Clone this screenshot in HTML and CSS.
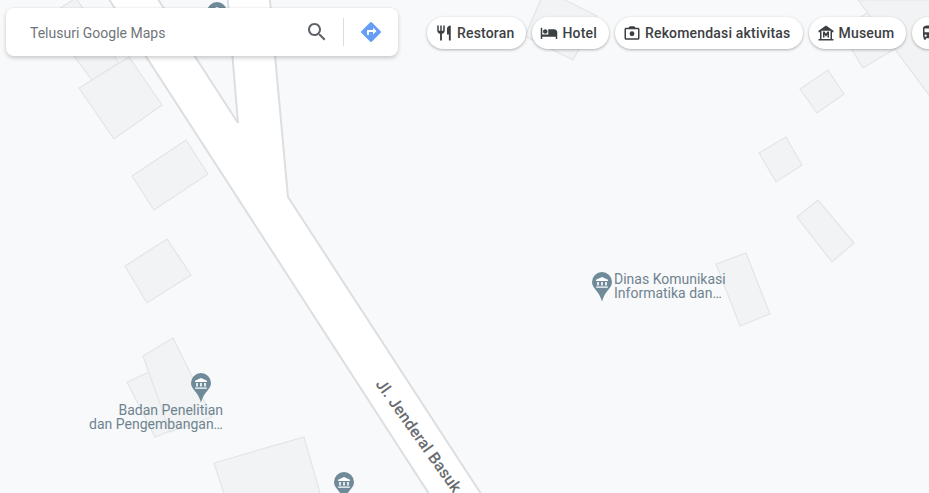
FILE: index.html
```html
<!DOCTYPE html>
<html lang="id">
<head>
<meta charset="utf-8">
<title>Google Maps</title>
<link rel="stylesheet" href="styles.css">
</head>
<body>
<div class="map">
  <svg class="map-art" width="929" height="493" viewBox="0 0 929 493" aria-hidden="true">
    <defs>
      <g id="pin">
        <path class="pin-body" d="M0-10a10 10 0 0 1 10 10c0 6.500-6.800 8-10 19.500C-3.200 8-10 6.500-10 0a10 10 0 0 1 10-10z"/>
        <path class="pin-glyph" d="M0-5 6-2.300V-1H-6V-2.300zM-4.800 0h1.600v3.600h-1.600zM-.8 0h1.600v3.600h-1.600zM3.200 0h1.600v3.600H3.200zM-5.800 4.400h11.600v1.300H-5.800z"/>
      </g>
    </defs>
    <g class="building">
      <polygon points="76,-2 119,63 92,80 45,18"/>
      <polygon points="79,88 129,57 162,105 114,139"/>
      <polygon points="132,176 186,140 208,174 154,210"/>
      <polygon points="125,266 167,239 191,275 147,303"/>
      <polygon points="127,382 149,372 178,428 155,437"/>
      <polygon points="143,356 173,338 212,417 170,432"/>
      <polygon points="214,463 304,437 322,500 226,500"/>
      <polygon points="545,-10 597,16 573,60 525,36"/>
      <polygon points="840,30 880,5 893,50 863,68"/>
      <polygon points="858,0 929,95 940,0"/>
      <polygon points="800,89 828,70 844,94 817,113"/>
      <polygon points="759,153 786,137 802,165 776,182"/>
      <polygon points="797,217 818,200 854,243 832,262"/>
      <polygon points="716,264 746,253 770,314 740,326"/>
    </g>
    <path class="road" d="M103-10 433 500H485L288 197 269-10H227L238 123 152-10Z"/>
    <use href="#pin" x="217" y="12"/>
    <use href="#pin" x="602" y="282"/>
    <use href="#pin" x="201" y="383"/>
    <use href="#pin" x="344" y="482"/>
  </svg>

  <div class="label label-dinas">Dinas Komunikasi<br>Informatika dan…</div>
  <div class="label label-badan">Badan Penelitian<br>dan Pengembangan…</div>
  <div class="road-label">Jl. Jenderal Basuk</div>

  <div class="topbar">
    <div class="search">
      <span class="search-text">Telusuri Google Maps</span>
      <svg class="search-icon" width="24" height="24" viewBox="0 0 24 24"><path d="M15.500 14h-.79l-.28-.27C15.410 12.590 16 11.110 16 9.500 16 5.910 13.090 3 9.500 3S3 5.910 3 9.500 5.910 16 9.500 16c1.610 0 3.090-.59 4.230-1.570l.27.28v.79l5 4.990L20.490 19l-4.990-5zm-6 0C7.010 14 5 11.990 5 9.500S7.010 5 9.500 5 14 7.010 14 9.500 11.990 14 9.500 14z"/></svg>
      <span class="divider"></span>
      <svg class="dir-icon" width="24" height="24" viewBox="0 0 24 24"><path d="M21.710 11.290l-9-9c-.39-.39-1.020-.39-1.410 0l-9 9c-.39.39-.39 1.020 0 1.410l9 9c.39.39 1.020.39 1.410 0l9-9c.39-.38.39-1.010 0-1.410zM14 14.500V12h-4v3H8v-4c0-.55.45-1 1-1h5V7.500l3.500 3.500-3.500 3.500z"/></svg>
    </div>
    <div class="chips">
      <div class="chip">
        <svg class="chip-icon" width="18" height="18" viewBox="0 0 24 24"><path d="M11 9H9V2H7v7H5V2H3v7c0 2.120 1.660 3.840 3.750 3.970V22h2.500v-9.030C11.340 12.840 13 11.120 13 9V2h-2v7zm5-3v8h2.500v8H21V2c-2.760 0-5 2.240-5 4z"/></svg>
        <span>Restoran</span>
      </div>
      <div class="chip">
        <svg class="chip-icon" width="18" height="18" viewBox="0 0 24 24"><path d="M7 13c1.660 0 3-1.340 3-3S8.660 7 7 7s-3 1.340-3 3 1.340 3 3 3zm12-6h-8v7H3V5H1v15h2v-3h18v3h2v-9c0-2.210-1.790-4-4-4z"/></svg>
        <span>Hotel</span>
      </div>
      <div class="chip">
        <svg class="chip-icon" width="18" height="18" viewBox="0 0 24 24"><path fill-rule="evenodd" d="M9 3 7.200 5H4C2.900 5 2 5.900 2 7v12c0 1.100.9 2 2 2h16c1.100 0 2-.9 2-2V7c0-1.100-.9-2-2-2h-3.200L15 3H9zM4 7h16v12H4V7z"/><circle cx="12" cy="13" r="3.200"/></svg>
        <span>Rekomendasi aktivitas</span>
      </div>
      <div class="chip">
        <svg class="chip-icon" width="18" height="18" viewBox="0 0 24 24"><path d="M22 11V9L12 2 2 9v2h2v9H2v2h20v-2h-2v-9h2zm-4 9H6V9h12v11z"/><path d="M10 14l2 3 2-3v4h2v-8h-2l-2 3-2-3H8v8h2z"/></svg>
        <span>Museum</span>
      </div>
      <div class="chip">
        <svg class="chip-icon" width="18" height="18" viewBox="0 0 24 24"><path d="M4 16c0 .88.39 1.670 1 2.220V20c0 .55.45 1 1 1h1c.55 0 1-.45 1-1v-1h8v1c0 .55.45 1 1 1h1c.55 0 1-.45 1-1v-1.780c.61-.55 1-1.340 1-2.220V6c0-3.500-3.580-4-8-4s-8 .5-8 4v10zm3.500 1c-.83 0-1.500-.67-1.500-1.500S6.670 14 7.500 14s1.500.67 1.500 1.500S8.330 17 7.500 17zm9 0c-.83 0-1.500-.67-1.500-1.500s.67-1.500 1.500-1.500 1.500.67 1.500 1.500-.67 1.500-1.500 1.500zm1.500-6H6V6h12v5z"/></svg>
        <span>Transportasi</span>
      </div>
    </div>
  </div>
</div>
</body>
</html>
```
FILE: styles.css
```css
* { box-sizing: border-box; }
html, body { margin: 0; padding: 0; overflow: hidden; }
body { font-family: Roboto, "Liberation Sans", sans-serif; background: #f8f9fb; }

.map {
  position: relative;
  width: 929px;
  height: 493px;
  overflow: hidden;
  background: #f8f9fb;
}
.map-art { position: absolute; left: 0; top: 0; display: block; }

.building polygon { fill: #f1f3f4; stroke: #e3e5e7; stroke-width: 1.2; }
.road { fill: #fff; stroke: #dcdee1; stroke-width: 2; }
.pin-body { fill: #6f8a99; }
.pin-glyph { fill: #fff; }

.label {
  position: absolute;
  font-size: 14px;
  line-height: 14px;
  color: #6f838f;
  white-space: nowrap;
}
.label-dinas { left: 614px; top: 272px; }
.label-badan { right: 706px; top: 403px; text-align: right; }

.road-label {
  position: absolute;
  left: 379px;
  top: 372px;
  font-size: 16px;
  line-height: 18px;
  font-weight: 500;
  letter-spacing: .2px;
  color: #686c70;
  white-space: nowrap;
  transform: rotate(54.500deg);
  transform-origin: 0 50%;
}

.topbar {
  position: absolute;
  left: 6px;
  top: 8px;
  display: flex;
  align-items: flex-start;
}
.search {
  flex: none;
  width: 392px;
  height: 48px;
  display: flex;
  align-items: center;
  padding: 0 15px 0 24px;
  background: #fff;
  border-radius: 8px;
  box-shadow: 0 2px 4px rgba(0, 0, 0, .2), 0 -1px 0 rgba(0, 0, 0, .02);
}
.search-text { flex: 1; padding-top: 2px; font-size: 14px; color: #70757a; }
.search-icon { fill: #5f6368; }
.divider { width: 1px; height: 28px; margin: 0 15px 0 14px; background: #dadce0; }
.dir-icon { fill: #669df6; }

.chips {
  flex: none;
  display: flex;
  gap: 6px;
  margin: 9px 0 0 29px;
}
.chip {
  flex: none;
  height: 32px;
  display: flex;
  align-items: center;
  gap: 4px;
  padding: 0 12px 0 8px;
  background: #fff;
  border-radius: 16px;
  box-shadow: 0 1px 3px rgba(0, 0, 0, .3);
  font-size: 14px;
  font-weight: 500;
  letter-spacing: .18px;
  color: #3c4043;
  white-space: nowrap;
}
.chip-icon { flex: none; fill: #3c4043; }
```
